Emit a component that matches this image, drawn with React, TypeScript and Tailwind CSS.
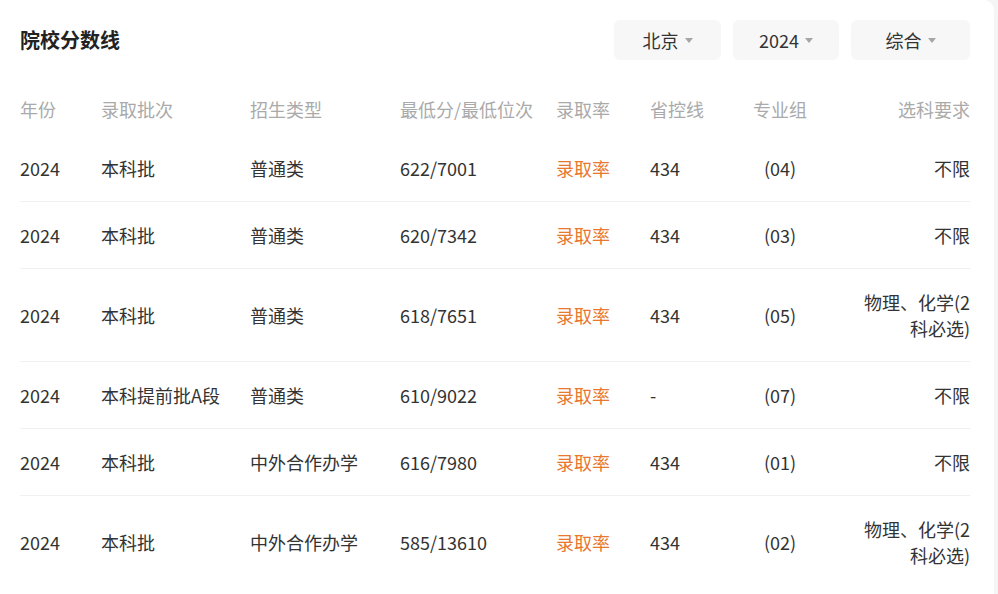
import React from "react";

const rows = [
  { year: "2024", batch: "本科批", type: "普通类", score: "622/7001", line: "434", group: "(04)", req: "不限" },
  { year: "2024", batch: "本科批", type: "普通类", score: "620/7342", line: "434", group: "(03)", req: "不限" },
  { year: "2024", batch: "本科批", type: "普通类", score: "618/7651", line: "434", group: "(05)", req: "物理、化学(2科必选)" },
  { year: "2024", batch: "本科提前批A段", type: "普通类", score: "610/9022", line: "-", group: "(07)", req: "不限" },
  { year: "2024", batch: "本科批", type: "中外合作办学", score: "616/7980", line: "434", group: "(01)", req: "不限" },
  { year: "2024", batch: "本科批", type: "中外合作办学", score: "585/13610", line: "434", group: "(02)", req: "物理、化学(2科必选)" },
];

function Select({ label, width }: { label: string; width: string }) {
  return (
    <div className={`${width} h-10 rounded-md bg-[#f7f7f7] flex items-center justify-center gap-[6px] text-[18px] text-[#333]`}>
      <span>{label}</span>
      <svg width="8" height="6" viewBox="0 0 8 6" className="mt-[1px]">
        <path d="M0 0h8L4 5z" fill="#a6a6a6" />
      </svg>
    </div>
  );
}

export default function App() {
  return (
    <div
      className="w-[998px] h-[594px] bg-[#f5f5f5] overflow-hidden"
      style={{ fontFamily: '"Noto Sans CJK SC", "Noto Sans", sans-serif' }}
    >
      <div className="w-[994px] h-full bg-white rounded-tr-[10px] pl-5 pr-6">
        {/* Header */}
        <div className="flex items-center justify-between pt-5 h-[60px]">
          <h2 className="text-[20px] font-bold text-[#222] -mt-[17px] self-end leading-[40px]">院校分数线</h2>
          <div className="flex gap-3">
            <Select label="北京" width="w-[107px]" />
            <Select label="2024" width="w-[106px]" />
            <Select label="综合" width="w-[119px]" />
          </div>
        </div>

        <table className="w-[950px] mt-[36px] table-fixed border-collapse text-[18px] leading-[26px]">
          <colgroup>
            <col className="w-[81px]" />
            <col className="w-[149px]" />
            <col className="w-[150px]" />
            <col className="w-[156px]" />
            <col className="w-[94px]" />
            <col className="w-[78px]" />
            <col className="w-[104px]" />
            <col className="w-[138px]" />
          </colgroup>
          <thead>
            <tr className="text-[#aaaaaa] text-left">
              <th className="font-normal pb-[13px]">年份</th>
              <th className="font-normal pb-[13px]">录取批次</th>
              <th className="font-normal pb-[13px]">招生类型</th>
              <th className="font-normal pb-[13px]">最低分/最低位次</th>
              <th className="font-normal pb-[13px]">录取率</th>
              <th className="font-normal pb-[13px]">省控线</th>
              <th className="font-normal pb-[13px] text-center">专业组</th>
              <th className="font-normal pb-[13px] text-right">选科要求</th>
            </tr>
          </thead>
          <tbody className="text-[#333]">
            {rows.map((r, i) => (
              <tr key={i} className={i < rows.length - 1 ? "border-b border-[#f0f0f0]" : ""}>
                <td className="py-5">{r.year}</td>
                <td className="py-5 whitespace-nowrap">{r.batch}</td>
                <td className="py-5">{r.type}</td>
                <td className="py-5">{r.score}</td>
                <td className="py-5 text-[#e8782e]">录取率</td>
                <td className="py-5">{r.line}</td>
                <td className="py-5 text-center">{r.group}</td>
                <td className="py-5 text-right">
                  <div className="ml-auto w-[108px] break-all">{r.req}</div>
                </td>
              </tr>
            ))}
          </tbody>
        </table>
      </div>
    </div>
  );
}
